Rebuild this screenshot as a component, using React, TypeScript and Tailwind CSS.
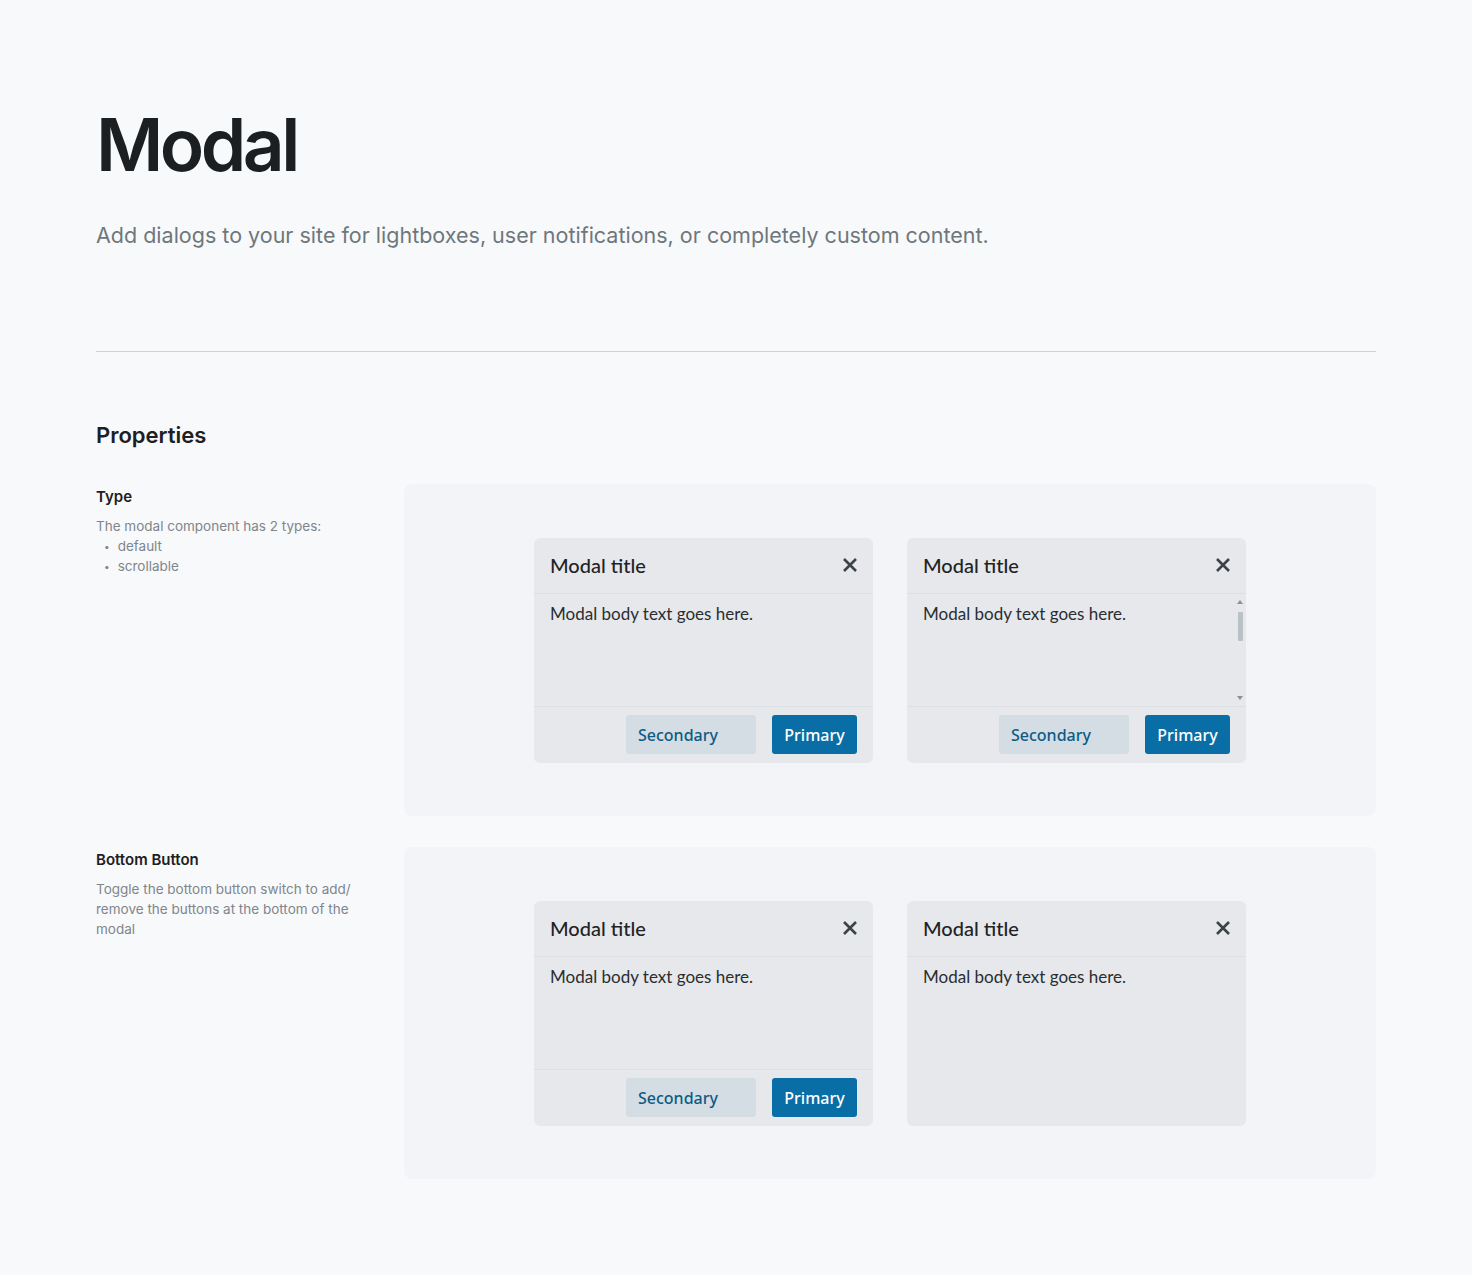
import React from 'react';

const ui = { fontFamily: 'Inter, "Liberation Sans", sans-serif' };
const lato = { fontFamily: 'Lato, "Open Sans", sans-serif' };
const btn = { fontFamily: '"Noto Sans", "Open Sans", sans-serif' };

const CloseIcon = () => (
  <svg width="16" height="16" viewBox="0 0 16 16" className="text-[#3b4346]">
    <path d="M2 2 L14 14 M14 2 L2 14" stroke="currentColor" strokeWidth="2.6" strokeLinecap="butt" />
  </svg>
);

const Scrollbar = () => (
  <div className="absolute right-[3px] top-[6px] bottom-[6px] w-[6px] flex flex-col items-center">
    <svg width="6" height="4" viewBox="0 0 6 4" className="text-[#8a9296]">
      <path d="M3 0 L6 4 L0 4 Z" fill="currentColor" />
    </svg>
    <div className="mt-[8px] h-[29px] w-[5px] rounded-[1px] bg-[#b9c2c6]" />
    <div className="flex-1" />
    <svg width="6" height="4" viewBox="0 0 6 4" className="text-[#8a9296]">
      <path d="M0 0 L6 0 L3 4 Z" fill="currentColor" />
    </svg>
  </div>
);

const ModalCard = ({ scroll = false, footer = true }: { scroll?: boolean; footer?: boolean }) => (
  <div className="w-[339px] h-[225px] rounded-[6px] bg-[#e6e8ec] flex flex-col overflow-hidden" style={lato}>
    <div className="h-[56px] flex items-center justify-between pl-[16px] pr-[15px] border-b border-[#dcdfe3]">
      <span className="text-[20px] text-[#1f2325] font-medium">Modal title</span>
      <CloseIcon />
    </div>
    <div className="relative flex-1 px-[16px] pt-[7px]">
      <p className="text-[17px] text-[#2a2e31]">Modal body text goes here.</p>
      {scroll && <Scrollbar />}
    </div>
    {footer && (
      <div className="h-[57px] border-t border-[#dcdfe3] flex items-center justify-end gap-[16px] px-[16px]" style={btn}>
        <button className="w-[130px] h-[39px] rounded-[3px] bg-[#d5dde4] text-[#0c5b84] text-[16px] font-medium text-left px-[12px]">
          Secondary
        </button>
        <button className="w-[85px] h-[39px] rounded-[3px] bg-[#0a6ea6] text-white text-[16px] font-medium">Primary</button>
      </div>
    )}
  </div>
);

const PropertyRow = ({
  title,
  children,
  cards,
}: {
  title: string;
  children: React.ReactNode;
  cards: React.ReactNode;
}) => (
  <div className="flex">
    <div className="w-[308px] shrink-0 pr-[32px] pt-[2px]">
      <h4 className="text-[15px] font-semibold text-[#1d2023]">{title}</h4>
      <div className="mt-[7px] text-[13.5px] leading-[20px] text-[#7f868b]">{children}</div>
    </div>
    <div className="flex-1 rounded-[8px] bg-[#f3f4f8] h-[332px] flex items-center justify-center gap-[34px]">
      {cards}
    </div>
  </div>
);

export default function App() {
  return (
    <div className="min-h-screen bg-[#f8f9fb] px-[96px] pt-[108px] pb-[96px]" style={ui}>
      <h1 className="text-[73px] leading-none font-semibold tracking-[-3.5px] text-[#1b1f22]">Modal</h1>
      <p className="mt-[38px] text-[21.5px] text-[#6e777c]">
        Add dialogs to your site for lightboxes, user notifications, or completely custom content.
      </p>
      <div className="mt-[100px] h-px bg-[#cfd3d6]" />
      <h2 className="mt-[67px] text-[22px] font-semibold text-[#1d2023]">Properties</h2>
      <div className="mt-[32px] flex flex-col gap-[31px]">
        <PropertyRow
          title="Type"
          cards={
            <>
              <ModalCard />
              <ModalCard scroll />
            </>
          }
        >
          <p>The modal component has 2 types:</p>
          <ul className="pl-[8px]">
            <li className="flex items-center gap-[8px]"><span className="text-[10px]">•</span>default</li>
            <li className="flex items-center gap-[8px]"><span className="text-[10px]">•</span>scrollable</li>
          </ul>
        </PropertyRow>
        <PropertyRow
          title="Bottom Button"
          cards={
            <>
              <ModalCard />
              <ModalCard footer={false} />
            </>
          }
        >
          <p>Toggle the bottom button switch to add/ remove the buttons at the bottom of the modal</p>
        </PropertyRow>
      </div>
    </div>
  );
}
